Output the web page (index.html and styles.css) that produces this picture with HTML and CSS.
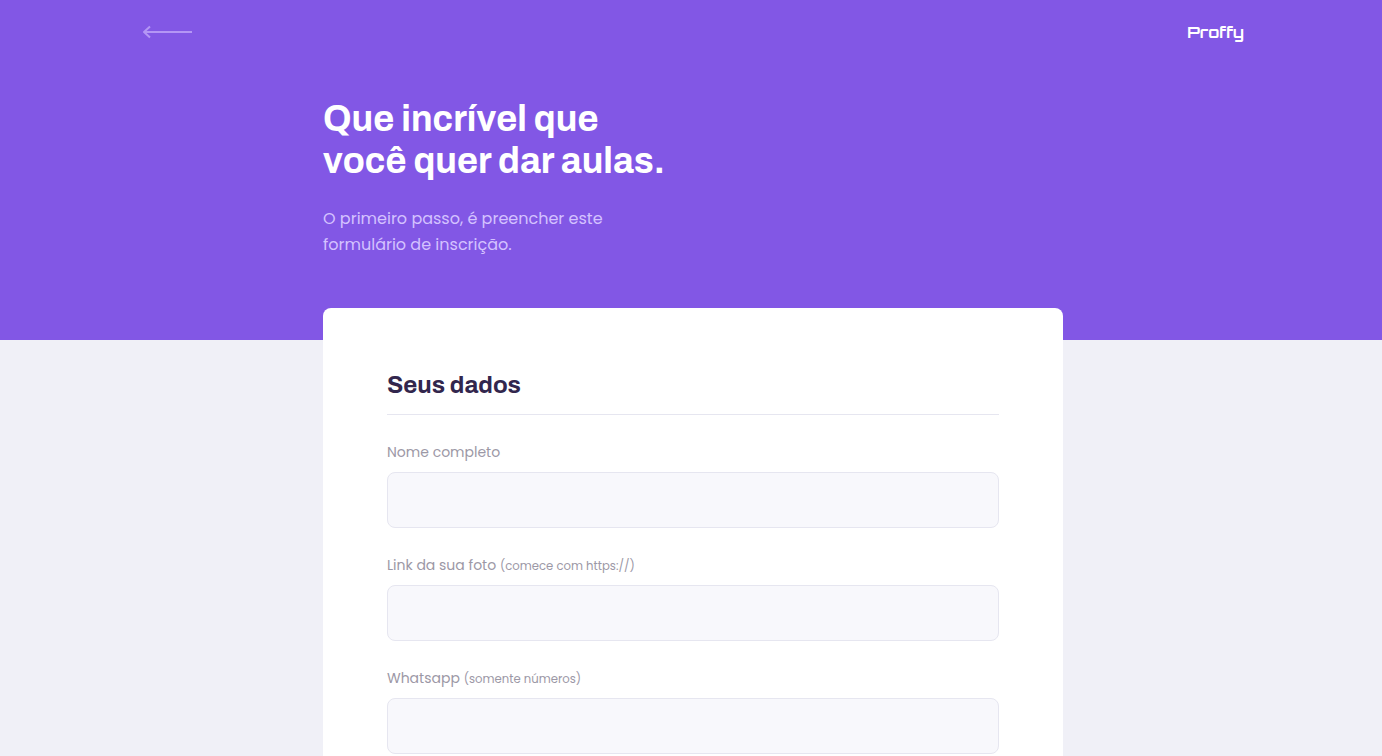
FILE: index.html
```html
<!DOCTYPE html>
<html lang="pt-BR">
<head>
<meta charset="utf-8">
<meta name="viewport" content="width=device-width, initial-scale=1">
<title>Proffy</title>
<link rel="stylesheet" href="styles.css">
</head>
<body>
<header class="page-header">
  <div class="top-bar">
    <a class="back" href="#" aria-label="Voltar">
      <svg width="50" height="14" viewBox="0 0 50 14" fill="none" stroke="currentColor" stroke-width="2" aria-hidden="true"><path d="M50 7H2M8 1.5L2 7L8 12.5" stroke-linejoin="round"/></svg>
    </a>
    <span class="logo">Proffy</span>
  </div>
  <div class="intro">
    <h1 class="title">Que incrível que<br>você quer dar aulas.</h1>
    <p class="lead">O primeiro passo, é preencher este<br>formulário de inscrição.</p>
  </div>
</header>
<main class="page-main">
  <form class="card">
    <h2 class="section-title">Seus dados</h2>
    <div class="field">
      <label class="label" for="name">Nome completo</label>
      <input class="input" id="name" type="text">
    </div>
    <div class="field">
      <label class="label" for="avatar">Link da sua foto <small class="hint">(comece com https://)</small></label>
      <input class="input" id="avatar" type="url">
    </div>
    <div class="field">
      <label class="label" for="whatsapp">Whatsapp <small class="hint">(somente números)</small></label>
      <input class="input" id="whatsapp" type="tel">
    </div>
  </form>
</main>
</body>
</html>
```
FILE: styles.css
```css
* {
  box-sizing: border-box;
  margin: 0;
  padding: 0;
}

body {
  display: flex;
  flex-direction: column;
  min-height: 100vh;
  background: #f0f0f7;
  color: #9c98a6;
  font-family: Poppins, Inter, sans-serif;
}

.page-header {
  padding: 0 0 82px 4px;
  background: #8257e5;
}

.top-bar {
  display: flex;
  align-items: center;
  justify-content: space-between;
  max-width: 1102px;
  height: 64px;
  margin: 0 auto;
}

.back {
  display: flex;
  color: #b496f5;
}

.logo {
  color: #fff;
  font: 700 16px/24px Orbitron, Oxanium, "DejaVu Sans", sans-serif;
}

.intro {
  max-width: 740px;
  margin: 34px auto 0;
}

.title {
  color: #fff;
  font: 700 36px/42px Archivo, "Liberation Sans", sans-serif;
}

.lead {
  margin-top: 24px;
  color: #d4c2ff;
  font-size: 16px;
  line-height: 26px;
}

.page-main {
  display: flex;
  flex: 1;
  justify-content: center;
  margin-top: -32px;
  padding-left: 4px;
}

.card {
  flex: 1;
  max-width: 740px;
  padding: 64px 64px 0;
  border-radius: 8px 8px 0 0;
  background: #fff;
}

.section-title {
  padding-bottom: 16px;
  border-bottom: 1px solid #e6e6f0;
  color: #32264d;
  font: 700 24px/26px Archivo, "Liberation Sans", sans-serif;
}

.field {
  margin-top: 24px;
}

.label {
  display: block;
  font-size: 14px;
  line-height: 27px;
}

.hint {
  line-height: 1;
}

.input {
  display: block;
  width: 100%;
  height: 56px;
  margin-top: 6px;
  padding: 0 16px;
  border: 1px solid #e6e6f0;
  border-radius: 8px;
  outline: 0;
  background: #f8f8fc;
  font: inherit;
}
```
